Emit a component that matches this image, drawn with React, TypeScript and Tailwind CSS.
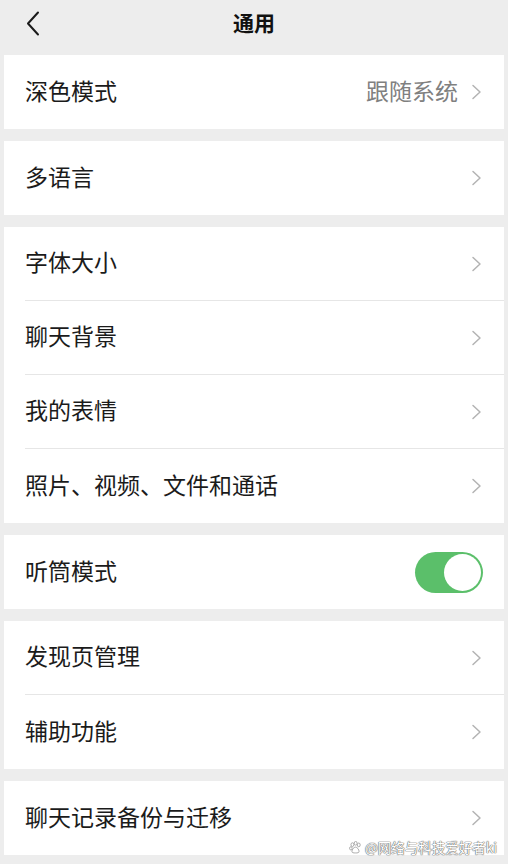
import React, { useState } from 'react';

type Row = { label: string; value?: string; toggle?: boolean };

const groups: Row[][] = [
  [{ label: '深色模式', value: '跟随系统' }],
  [{ label: '多语言' }],
  [
    { label: '字体大小' },
    { label: '聊天背景' },
    { label: '我的表情' },
    { label: '照片、视频、文件和通话' },
  ],
  [{ label: '听筒模式', toggle: true }],
  [{ label: '发现页管理' }, { label: '辅助功能' }],
  [{ label: '聊天记录备份与迁移' }],
];

const Chevron = () => (
  <svg width="12" height="16" viewBox="0 0 12 16" fill="none" className="ml-[13px]">
    <path d="M2 1.5l7 6.5-7 6.5" stroke="#b3b3b3" strokeWidth="1.5" strokeLinecap="round" strokeLinejoin="round" />
  </svg>
);

const Paw = () => (
  <svg width="13" height="13" viewBox="0 0 16 16" fill="white" stroke="#9a9a9a" strokeWidth="1">
    <ellipse cx="4.2" cy="4.5" rx="1.8" ry="2.3" />
    <ellipse cx="8.2" cy="2.8" rx="1.8" ry="2.3" />
    <ellipse cx="12" cy="4.8" rx="1.8" ry="2.3" />
    <ellipse cx="2.3" cy="9" rx="1.6" ry="2" />
    <path d="M8 7.5c-2.2 0-4.4 3.3-4.4 5.3 0 1.8 2 1.9 4.4 1.9s4.4-.1 4.4-1.9c0-2-2.2-5.3-4.4-5.3z" />
  </svg>
);

const Toggle = () => {
  const [on, setOn] = useState(true);
  return (
    <button
      onClick={() => setOn(!on)}
      className={`flex h-[41px] w-[68px] items-center rounded-full p-[2px] ${
        on ? 'justify-end bg-[#5bbf6a]' : 'justify-start bg-[#e5e5e5]'
      }`}
    >
      <span className="h-[37px] w-[37px] rounded-full bg-white" />
    </button>
  );
};

const SettingRow: React.FC<{ row: Row; last: boolean }> = ({ row, last }) => (
  <div className="pl-[21px]">
    <div
      className={`flex h-[74px] items-center pr-[21px] ${
        last ? '' : 'border-b border-[#e6e6e6]'
      }`}
    >
      <span className="flex-1 pb-[4px] text-[23px] text-[#1b1b1b]">{row.label}</span>
      {row.value && <span className="pb-[4px] text-[23px] text-[#808080]">{row.value}</span>}
      {row.toggle ? <Toggle /> : <Chevron />}
    </div>
  </div>
);

export default function App() {
  return (
    <div
      className="relative h-[864px] w-[508px] overflow-hidden bg-[#ededed]"
      style={{ fontFamily: '"Noto Sans CJK SC", "Noto Sans", sans-serif' }}
    >
      <div className="relative flex h-[55px] justify-center pt-[6px]">
        <svg width="14" height="26" viewBox="0 0 14 26" fill="none" className="absolute left-[26px] top-[11px]">
          <path d="M12 1.5L2 12.5l10 11" stroke="#1a1a1a" strokeWidth="2" strokeLinecap="round" strokeLinejoin="round" />
        </svg>
        <span className="text-[21px] font-bold leading-[32px] text-[#111]">通用</span>
      </div>
      <div className="flex flex-col gap-[12px] px-[4px]">
        {groups.map((g, i) => (
          <div key={i} className="bg-white">
            {g.map((row, j) => (
              <SettingRow key={row.label} row={row} last={j === g.length - 1} />
            ))}
          </div>
        ))}
      </div>
      <div className="absolute bottom-[10px] right-[11px] flex items-center gap-[3px] text-[13.5px] leading-none text-white [text-shadow:0_0_1px_#666,0_0_1px_#666,0_0_1px_#666]">
        <Paw />
        <span>@网络与科技爱好者ki</span>
      </div>
    </div>
  );
}
